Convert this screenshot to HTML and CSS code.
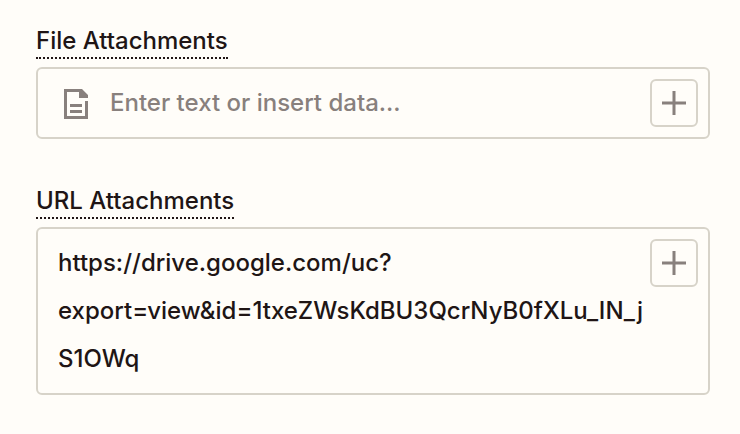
FILE: index.html
```html
<!DOCTYPE html>
<html lang="en">
<head>
    <meta charset="UTF-8">
    <meta name="viewport" content="width=device-width, initial-scale=1.0">
    <title>Attachments</title>
    <link rel="stylesheet" href="styles.css">
</head>
<body>
    <form class="attachments">
        <div class="field">
            <label for="fileAttachments">File Attachments</label>
            <div class="field-box">
                <svg class="file-icon" viewBox="0 0 24 30" aria-hidden="true">
                    <path d="M0 0H18L24 6V9H15V3H3V27H21V12H24V30H0Z"/>
                    <path d="M6 15H18V18H6ZM6 21H18V24H6Z"/>
                </svg>
                <input type="text" id="fileAttachments" name="fileAttachments" placeholder="Enter text or insert data...">
                <button type="button" class="insert-button" aria-label="Insert data">
                    <svg viewBox="0 0 24 24" aria-hidden="true"><path d="M12 0V24M0 12H24"/></svg>
                </button>
            </div>
        </div>
        <div class="field">
            <label for="urlAttachments">URL Attachments</label>
            <div class="field-box">
                <textarea id="urlAttachments" name="urlAttachments" rows="3" spellcheck="false">https://drive.google.com/uc?export=view&amp;id=1txeZWsKdBU3QcrNyB0fXLu_IN_jS1OWq</textarea>
                <button type="button" class="insert-button" aria-label="Insert data">
                    <svg viewBox="0 0 24 24" aria-hidden="true"><path d="M12 0V24M0 12H24"/></svg>
                </button>
            </div>
        </div>
    </form>
</body>
</html>
```
FILE: styles.css
```css
* {
    box-sizing: border-box;
}
body {
    margin: 0;
    background-color: #FFFDF9;
    color: #201515;
    font-family: Inter, "Liberation Sans", sans-serif;
    font-size: 24px;
    font-weight: 500;
}
.attachments {
    display: flex;
    flex-direction: column;
    gap: 48px;
    padding: 27px 30px 38px 36px;
}
.field {
    display: flex;
    flex-direction: column;
    align-items: flex-start;
    gap: 8px;
}
label {
    line-height: 28px;
    padding-bottom: 2px;
    border-bottom: 2px dotted #201515;
}
.field-box {
    display: flex;
    align-items: flex-start;
    width: 100%;
    padding: 10px;
    border: 2px solid #D7D3C9;
    border-radius: 6px;
}
.file-icon {
    width: 24px;
    height: 30px;
    margin: 10px 12px 0 16px;
    fill: #88807D;
}
input,
textarea {
    flex: 1;
    min-width: 0;
    margin: 0;
    padding: 0 0 0 10px;
    border: none;
    outline: none;
    background: none;
    color: inherit;
    font: inherit;
    line-height: 48px;
}
input {
    height: 48px;
}
textarea {
    display: block;
    resize: none;
    overflow: hidden;
}
input::placeholder {
    color: #88807D;
    opacity: 1;
}
.insert-button {
    display: flex;
    align-items: center;
    justify-content: center;
    width: 48px;
    height: 48px;
    padding: 0;
    border: 2px solid #D7D3C9;
    border-radius: 6px;
    background: none;
    cursor: pointer;
}
.insert-button svg {
    width: 24px;
    height: 24px;
    stroke: #88807D;
    stroke-width: 3;
}
.insert-button:hover {
    border-color: #88807D;
}
```
